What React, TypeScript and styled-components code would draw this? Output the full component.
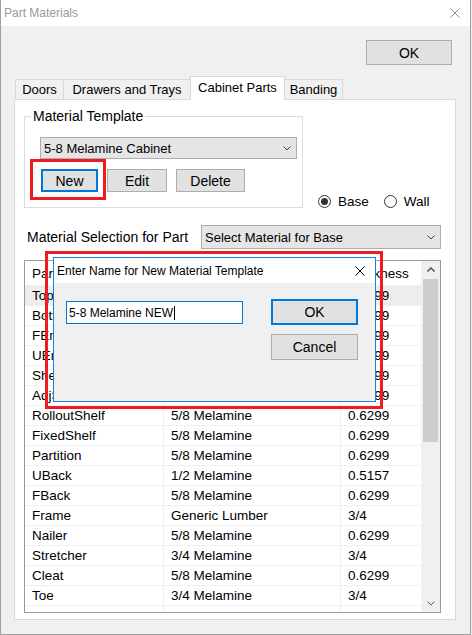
import React from "react";
import styled, { createGlobalStyle } from "styled-components";

const GlobalStyle = createGlobalStyle`
  html, body {
    margin: 0;
    padding: 0;
    background: #f0f0f0;
  }
  body {
    font-family: "Liberation Sans", Arial, sans-serif;
    color: #000;
  }
  *, *::before, *::after { box-sizing: border-box; }
`;

const Window = styled.div`
  position: relative;
  width: 471px;
  height: 635px;
  background: #f0f0f0;
  border-left: 1px solid #a0a0a0;
  border-right: 1px solid #a0a0a0;
  border-bottom: 1px solid #a0a0a0;
  display: flex;
  flex-direction: column;
`;

const TitleBar = styled.div<{ $active?: boolean; $h: number }>`
  height: ${(p) => p.$h}px;
  flex: 0 0 auto;
  background: #fff;
  display: flex;
  align-items: center;
  justify-content: space-between;
  padding: 0 10px 0 3px;
  font-size: 12px;
  color: ${(p) => (p.$active ? "#000" : "#999")};
`;

const Body = styled.div`
  display: flex;
  flex-direction: column;
  padding: 0 14px 0 13px;
`;

const TopRow = styled.div`
  display: flex;
  justify-content: flex-end;
  padding: 14px 4px 0 0;
`;

const Button = styled.button<{ $w: number; $h?: number; $focused?: boolean }>`
  width: ${(p) => p.$w}px;
  height: ${(p) => p.$h ?? 23}px;
  flex: 0 0 auto;
  background: #e1e1e1;
  border: ${(p) => (p.$focused ? "2px solid #0078d7" : "1px solid #adadad")};
  font: 14px "Liberation Sans", Arial, sans-serif;
  color: #000;
  padding: 0;
  margin: 0;
`;

const TabStrip = styled.div`
  display: flex;
  align-items: flex-end;
  height: 23px;
  margin-top: 11px;
  padding-left: 1px;
`;

const Tab = styled.div<{ $w: number; $active?: boolean; $first?: boolean }>`
  width: ${(p) => p.$w}px;
  height: ${(p) => (p.$active ? 24 : 20)}px;
  margin-left: ${(p) => (p.$first ? 0 : -1)}px;
  margin-bottom: ${(p) => (p.$active ? -1 : 0)}px;
  position: relative;
  z-index: ${(p) => (p.$active ? 2 : 1)};
  background: ${(p) => (p.$active ? "#fff" : "#f0f0f0")};
  border: 1px solid #d9d9d9;
  border-bottom: none;
  display: flex;
  align-items: center;
  justify-content: center;
  padding-bottom: ${(p) => (p.$active ? 3 : 0)}px;
  font-size: 13px;
  white-space: nowrap;
`;

const Panel = styled.div`
  height: 521px;
  background: #fff;
  border: 1px solid #d9d9d9;
  padding: 8px 0 0 9px;
  display: flex;
  flex-direction: column;
`;

const TemplateRow = styled.div`
  display: flex;
  align-items: flex-end;
  gap: 15px;
`;

const GroupBox = styled.fieldset`
  width: 279px;
  margin: 0;
  min-width: 0;
  border: 1px solid #dcdcdc;
  padding: 13px 0 15px 15px;
`;

const Legend = styled.legend`
  font-size: 14px;
  line-height: 16px;
  padding: 0 2px;
  margin-left: -9px;
`;

const Combo = styled.div<{ $w: number; $h: number }>`
  width: ${(p) => p.$w}px;
  height: ${(p) => p.$h}px;
  background: #e5e5e5;
  border: 1px solid #adadad;
  display: flex;
  align-items: center;
  justify-content: space-between;
  padding: 0 5px 0 3px;
  font-size: 13px;
  white-space: nowrap;
`;

const ButtonRow = styled.div`
  display: flex;
  gap: 9px;
  margin-top: 10px;
  padding-left: 1px;
`;

const Marked = styled.div`
  position: relative;
  display: flex;
  &::after {
    content: "";
    position: absolute;
    left: -11px;
    top: -10px;
    width: 76px;
    height: 41px;
    border: 3px solid #ed1c24;
    pointer-events: none;
  }
`;

const Radios = styled.div`
  display: flex;
  align-items: center;
  margin-bottom: -1px;
  font-size: 13.5px;
`;

const RadioLabel = styled.label<{ $gap?: number }>`
  display: flex;
  align-items: center;
  gap: 7px;
  margin-left: ${(p) => p.$gap ?? 0}px;
`;

const RadioDot = styled.span<{ $checked?: boolean }>`
  width: 13px;
  height: 13px;
  border-radius: 50%;
  border: 1px solid #333;
  background: #fff;
  display: flex;
  align-items: center;
  justify-content: center;
  &::after {
    content: "";
    width: 7px;
    height: 7px;
    border-radius: 50%;
    background: ${(p) => (p.$checked ? "#333" : "transparent")};
  }
`;

const SelectionRow = styled.div`
  display: flex;
  align-items: center;
  margin-top: 17px;
  padding-left: 3px;
`;

const FieldLabel = styled.div`
  flex: 0 0 174px;
  font-size: 14px;
  white-space: nowrap;
`;

const Grid = styled.div`
  width: 417px;
  height: 353px;
  margin-top: 11px;
  border: 1px solid #999;
  display: flex;
  overflow: hidden;
`;

const TableArea = styled.div`
  flex: 1;
  overflow: hidden;
`;

const Row = styled.div<{ $header?: boolean; $selected?: boolean }>`
  display: grid;
  grid-template-columns: 139px 177px 1fr;
  height: ${(p) => (p.$header ? 24 : 20)}px;
  border-top: ${(p) => (p.$header ? "none" : "1px solid #f0f0f0")};
  background: ${(p) => (p.$selected ? "#ededed" : "#fff")};
  font-size: 13.5px;
`;

const Cell = styled.div`
  border-right: 1px solid #f0f0f0;
  padding-left: 7px;
  display: flex;
  align-items: center;
  white-space: nowrap;
  overflow: hidden;
`;

const ScrollBar = styled.div`
  flex: 0 0 18px;
  background: #f0f0f0;
  display: flex;
  flex-direction: column;
`;

const ScrollButton = styled.div`
  height: 17px;
  display: flex;
  align-items: center;
  justify-content: center;
`;

const Thumb = styled.div`
  height: 163px;
  margin: 1px 2px 0 1px;
  background: #cdcdcd;
`;

const Spacer = styled.div`
  flex: 1;
`;

const Highlight = styled.div`
  position: absolute;
  left: 44px;
  top: 251px;
  width: 338px;
  height: 158px;
  border: 3px solid #ed1c24;
  padding: 3px 0 0 5px;
  z-index: 10;
`;

const Dialog = styled.div`
  width: 323px;
  height: 145px;
  border: 1px solid #1883d7;
  background: #f0f0f0;
  display: flex;
  flex-direction: column;
`;

const DialogBody = styled.div`
  display: flex;
  gap: 28px;
  padding: 16px 0 0 12px;
`;

const TextBox = styled.div`
  width: 177px;
  height: 23px;
  margin-top: 2px;
  background: #fff;
  border: 1px solid #0078d7;
  display: flex;
  align-items: center;
  padding-left: 2px;
  font-size: 12px;
`;

const Caret = styled.span`
  display: inline-block;
  width: 1px;
  height: 14px;
  background: #000;
  margin-left: 1px;
`;

const DialogButtons = styled.div`
  display: flex;
  flex-direction: column;
  gap: 9px;
`;

const CloseIcon = ({ color }: { color: string }) => (
  <svg width="10" height="10" viewBox="0 0 10 10">
    <path d="M0.5 0.5 L9.5 9.5 M9.5 0.5 L0.5 9.5" stroke={color} strokeWidth="1" />
  </svg>
);

const Chevron = ({ up, color = "#444", w = 8 }: { up?: boolean; color?: string; w?: number }) => (
  <svg width={w} height="5" viewBox="0 0 8 5">
    <path
      d={up ? "M0.5 4.5 L4 1 L7.5 4.5" : "M0.5 0.5 L4 4 L7.5 0.5"}
      fill="none"
      stroke={color}
      strokeWidth={up ? 1.6 : 1}
    />
  </svg>
);

const rows: [string, string, string][] = [
  ["Top", "5/8 Melamine", "0.6299"],
  ["Bottom", "5/8 Melamine", "0.6299"],
  ["FEnd", "5/8 Melamine", "0.6299"],
  ["UEnd", "5/8 Melamine", "0.6299"],
  ["Shelf", "5/8 Melamine", "0.6299"],
  ["AdjShelf", "5/8 Melamine", "0.6299"],
  ["RolloutShelf", "5/8 Melamine", "0.6299"],
  ["FixedShelf", "5/8 Melamine", "0.6299"],
  ["Partition", "5/8 Melamine", "0.6299"],
  ["UBack", "1/2 Melamine", "0.5157"],
  ["FBack", "5/8 Melamine", "0.6299"],
  ["Frame", "Generic Lumber", "3/4"],
  ["Nailer", "5/8 Melamine", "0.6299"],
  ["Stretcher", "3/4 Melamine", "3/4"],
  ["Cleat", "5/8 Melamine", "0.6299"],
  ["Toe", "3/4 Melamine", "3/4"],
  ["", "", ""],
];

export default function App() {
  return (
    <>
      <GlobalStyle />
      <Window>
        <TitleBar $h={26}>
          <span>Part Materials</span>
          <CloseIcon color="#8c8c8c" />
        </TitleBar>
        <Body>
          <TopRow>
            <Button $w={86} $h={25}>OK</Button>
          </TopRow>
          <TabStrip>
            <Tab $w={49} $first>Doors</Tab>
            <Tab $w={128}>Drawers and Trays</Tab>
            <Tab $w={95} $active>Cabinet Parts</Tab>
            <Tab $w={59}>Banding</Tab>
          </TabStrip>
          <Panel>
            <TemplateRow>
              <GroupBox>
                <Legend>Material Template</Legend>
                <Combo $w={257} $h={22}>
                  <span>5-8 Melamine Cabinet</span>
                  <Chevron />
                </Combo>
                <ButtonRow>
                  <Marked>
                    <Button $w={57} $focused>New</Button>
                  </Marked>
                  <Button $w={60}>Edit</Button>
                  <Button $w={69}>Delete</Button>
                </ButtonRow>
              </GroupBox>
              <Radios>
                <RadioLabel>
                  <RadioDot $checked />
                  Base
                </RadioLabel>
                <RadioLabel $gap={15}>
                  <RadioDot />
                  Wall
                </RadioLabel>
              </Radios>
            </TemplateRow>
            <SelectionRow>
              <FieldLabel>Material Selection for Part</FieldLabel>
              <Combo $w={240} $h={24}>
                <span>Select Material for Base</span>
                <Chevron />
              </Combo>
            </SelectionRow>
            <Grid>
              <TableArea>
                <Row $header>
                  <Cell>Part</Cell>
                  <Cell>Material</Cell>
                  <Cell>Thickness</Cell>
                </Row>
                {rows.map(([part, mat, thick], i) => (
                  <Row key={i} $selected={i === 0}>
                    <Cell>{part}</Cell>
                    <Cell>{mat}</Cell>
                    <Cell>{thick}</Cell>
                  </Row>
                ))}
              </TableArea>
              <ScrollBar>
                <ScrollButton>
                  <Chevron up color="#606060" />
                </ScrollButton>
                <Thumb />
                <Spacer />
                <ScrollButton>
                  <Chevron color="#606060" />
                </ScrollButton>
              </ScrollBar>
            </Grid>
          </Panel>
        </Body>
        <Highlight>
          <Dialog>
            <TitleBar $h={25} $active>
              <span>Enter Name for New Material Template</span>
              <CloseIcon color="#000" />
            </TitleBar>
            <DialogBody>
              <TextBox>
                5-8 Melamine NEW
                <Caret />
              </TextBox>
              <DialogButtons>
                <Button $w={87} $h={26} $focused>OK</Button>
                <Button $w={87} $h={26}>Cancel</Button>
              </DialogButtons>
            </DialogBody>
          </Dialog>
        </Highlight>
      </Window>
    </>
  );
}
